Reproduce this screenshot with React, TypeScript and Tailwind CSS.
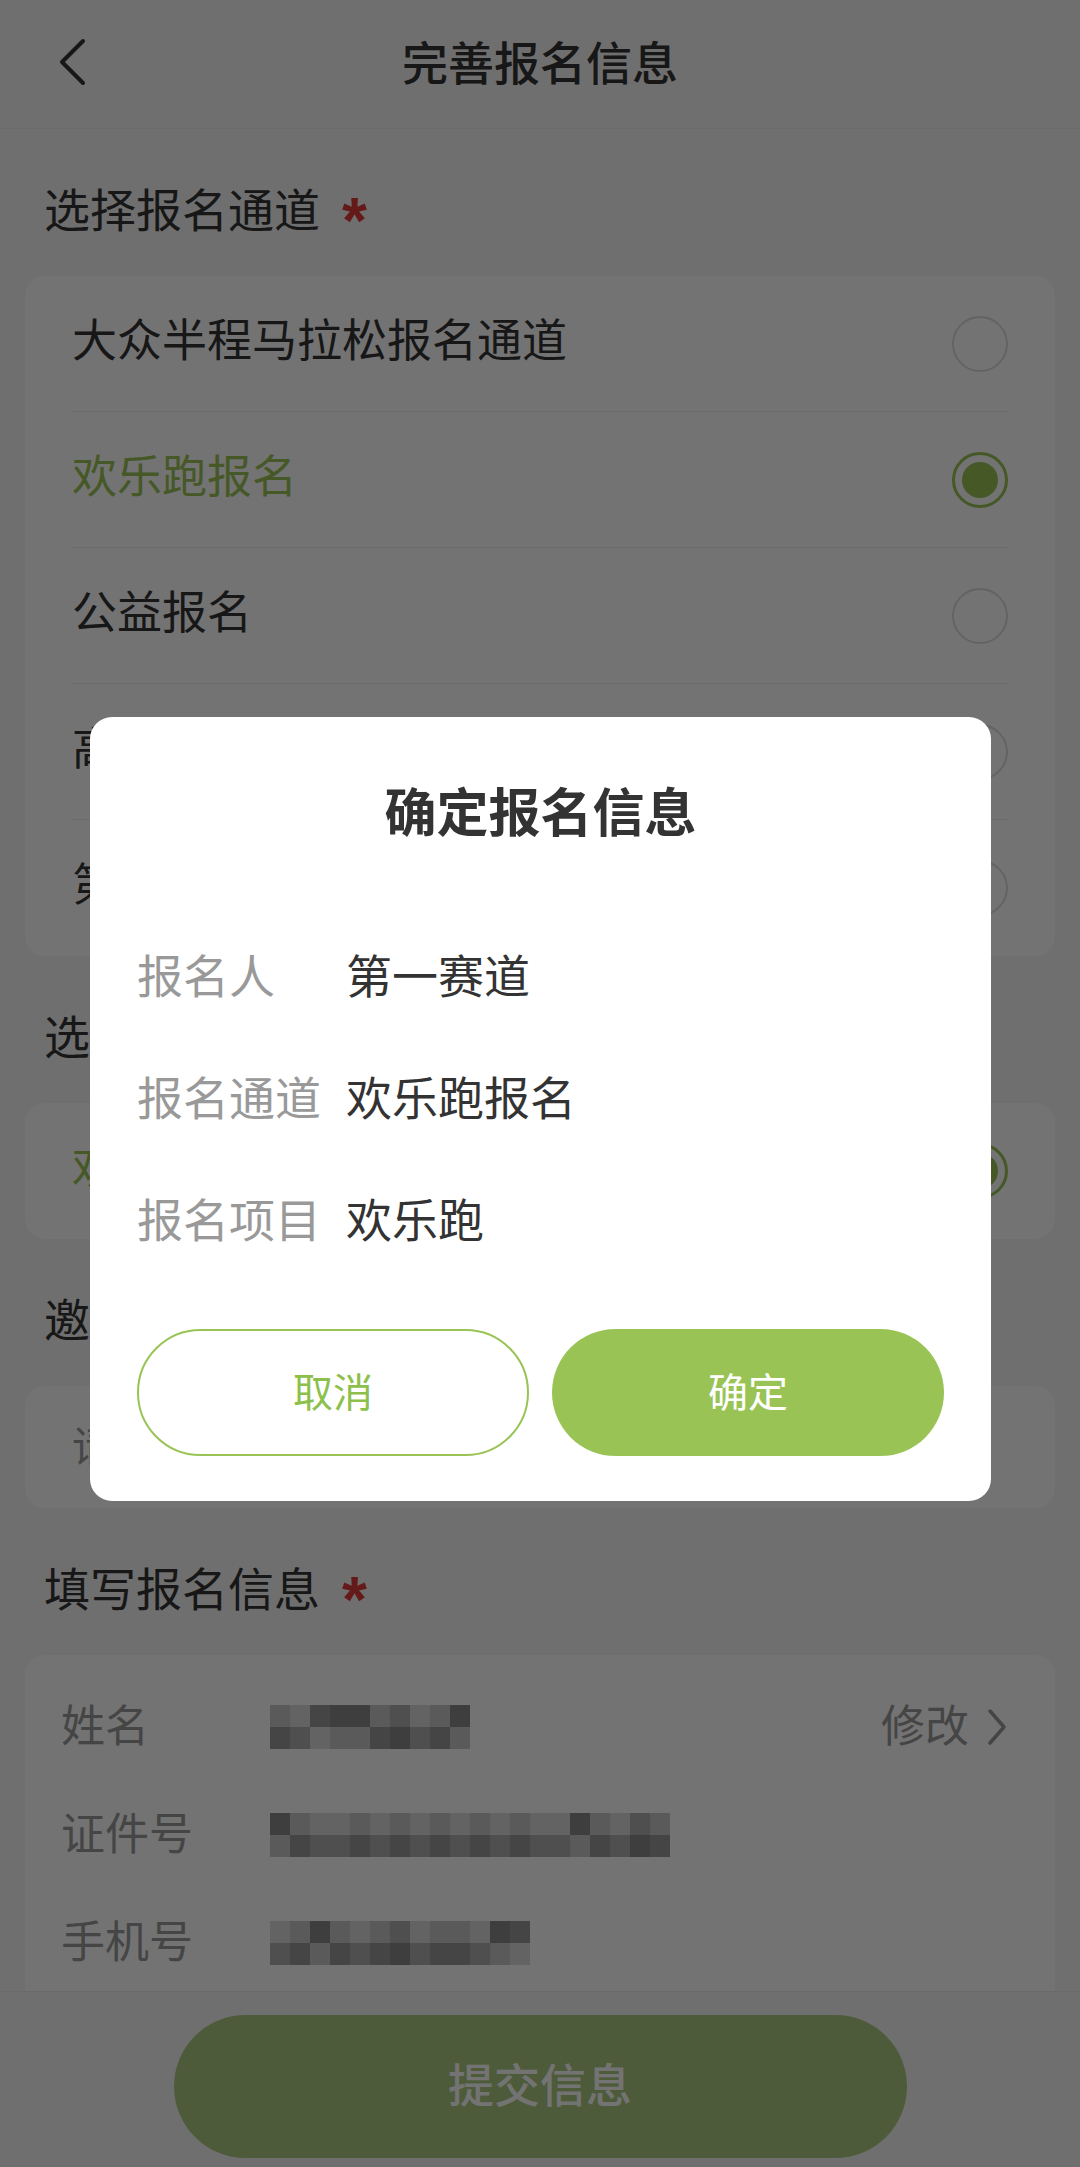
import React from 'react';

const FONT = "font-['Noto_Sans_CJK_SC','Noto_Sans',sans-serif]";

const channels = [
  { name: '大众半程马拉松报名通道', checked: false },
  { name: '欢乐跑报名', checked: true },
  { name: '公益报名', checked: false },
  { name: '高校报名', checked: false },
  { name: '第一赛道报名', checked: false },
];

const shades = ['bg-[#8e8e8e]', 'bg-[#a8a8a8]', 'bg-[#c2c2c2]', 'bg-[#d8d8d8]', 'bg-[#7e7e7e]'];

// mosaic rows for the blurred personal data
const mosaics = [
  [0, 1, 3, 2, 2, 0, 4, 1, 0, 2],
  [2, 0, 1, 1, 0, 1, 0, 1, 0, 1, 0, 1, 0, 1, 1, 2, 0, 1, 4, 0],
  [1, 0, 2, 0, 1, 0, 4, 1, 0, 0, 1, 2, 3],
];

const Radio = ({ checked }: { checked: boolean }) =>
  checked ? (
    <div className="w-[56px] h-[56px] rounded-full border-[3px] border-[#99c455] flex items-center justify-center">
      <div className="w-[36px] h-[36px] rounded-full bg-[#99c455]" />
    </div>
  ) : (
    <div className="w-[56px] h-[56px] rounded-full border-2 border-[#dcdcdc]" />
  );

const SectionTitle = ({ children, required }: { children: React.ReactNode; required?: boolean }) => (
  <h2 className="pt-[50px] pb-[33px] pl-[19px] leading-[64px] text-[46px] text-[#333] flex items-center">
    <span className="relative -top-[4px]">{children}</span>
    {required && (
      <span className="ml-[22px] text-[#e03a3a] text-[64px] font-bold leading-none font-['Liberation_Sans',sans-serif] translate-y-[10px]">
        *
      </span>
    )}
  </h2>
);

const Mosaic = ({ cells }: { cells: number[] }) => (
  <div className="flex flex-col opacity-90">
    <div className="flex">
      {cells.map((c, i) => (
        <div key={i} className={`w-[20px] h-[22px] ${shades[(c + 2) % shades.length]}`} />
      ))}
    </div>
    <div className="flex">
      {cells.map((c, i) => (
        <div key={i} className={`w-[20px] h-[22px] ${shades[c]}`} />
      ))}
    </div>
  </div>
);

export default function App() {
  return (
    <div className={`relative w-[1080px] h-[2167px] overflow-hidden bg-[#f5f5f5] ${FONT}`}>
      {/* header */}
      <header className="h-[129px] grid grid-cols-[160px_1fr_160px] items-center border-b border-[#ebebeb]">
        <div className="pl-[58px]">
          <svg width="30" height="48" viewBox="0 0 30 48" fill="none" className="relative -top-[2px]">
            <path d="M25 3 L4 24 L25 45" stroke="#333" strokeWidth="4" strokeLinecap="round" strokeLinejoin="round" />
          </svg>
        </div>
        <h1 className="relative -top-[4px] text-center text-[46px] font-medium text-[#333]">完善报名信息</h1>
        <div />
      </header>

      <main className="px-[25px]">
        <SectionTitle required>选择报名通道</SectionTitle>
        <div className="bg-white rounded-[20px] px-[47px]">
          {channels.map((c, i) => (
            <div
              key={c.name}
              className={`h-[136px] flex items-center justify-between ${i < channels.length - 1 ? 'border-b border-[#eeeeee]' : ''}`}
            >
              <span className={`relative -top-[6px] text-[45px] ${c.checked ? 'text-[#99c455]' : 'text-[#333]'}`}>{c.name}</span>
              <Radio checked={c.checked} />
            </div>
          ))}
        </div>

        <SectionTitle>选择报名项目</SectionTitle>
        <div className="bg-white rounded-[20px] px-[47px]">
          <div className="h-[136px] flex items-center justify-between">
            <span className="relative -top-[6px] text-[45px] text-[#99c455]">欢乐跑</span>
            <Radio checked />
          </div>
        </div>

        <SectionTitle>邀请码</SectionTitle>
        <div className="bg-white rounded-[20px] px-[47px] h-[122px] flex items-center">
          <span className="relative -top-[4px] text-[42px] text-[#999]">请输入邀请码（选填）</span>
        </div>

        <SectionTitle required>填写报名信息</SectionTitle>
        <div className="bg-white rounded-[20px] pl-[36px] pr-[48px] pt-[18px] pb-[60px]">
          {[
            { label: '姓名', cells: mosaics[0], edit: true },
            { label: '证件号', cells: mosaics[1] },
            { label: '手机号', cells: mosaics[2] },
          ].map((r) => (
            <div key={r.label} className="h-[108px] flex items-center">
              <span className="relative -top-[4px] w-[209px] text-[44px] text-[#9a9a9a]">{r.label}</span>
              <Mosaic cells={r.cells} />
              {r.edit && (
                <span className="ml-auto flex items-center gap-[18px] text-[44px] text-[#9a9a9a]">
                  <span className="relative -top-[4px]">修改</span>
                  <svg width="20" height="40" viewBox="0 0 20 40" fill="none">
                    <path d="M3 4 L17 20 L3 36" stroke="#9a9a9a" strokeWidth="3.5" strokeLinecap="round" strokeLinejoin="round" />
                  </svg>
                </span>
              )}
            </div>
          ))}
        </div>
      </main>

      {/* bottom bar */}
      <div className="absolute left-0 right-0 bottom-0 h-[176px] bg-[#f5f5f5] border-t border-[#ebebeb] flex justify-center pt-[23px]">
        <button className="w-[733px] h-[143px] rounded-full bg-[#abcb80] text-white text-[46px] font-medium">
          <span className="relative -top-[4px]">提交信息</span>
        </button>
      </div>

      {/* mask + dialog */}
      <div className="absolute inset-0 bg-black/55">
        <div className="absolute left-[90px] top-[717px] w-[901px] bg-white rounded-[22px] px-[47px] pb-[45px]">
          <h3 className="h-[198px] flex items-center justify-center text-[52px] font-bold text-[#333]">
            <span className="relative -top-[6px]">确定报名信息</span>
          </h3>
          <div className="flex flex-col">
            {[
              ['报名人', '第一赛道'],
              ['报名通道', '欢乐跑报名'],
              ['报名项目', '欢乐跑'],
            ].map(([k, v]) => (
              <div key={k} className="h-[122px] flex items-center text-[46px]">
                <span className="relative -top-[3px] w-[209px] text-[#999]">{k}</span>
                <span className="relative -top-[3px] text-[#333]">{v}</span>
              </div>
            ))}
          </div>
          <div className="mt-[48px] grid grid-cols-2 gap-[23px]">
            <button className="h-[127px] rounded-full border-2 border-[#99c455] text-[#8cc04a] text-[40px]">
              <span className="relative -top-[3px]">取消</span>
            </button>
            <button className="h-[127px] rounded-full bg-[#99c455] text-white text-[40px]">
              <span className="relative -top-[3px]">确定</span>
            </button>
          </div>
        </div>
      </div>
    </div>
  );
}
